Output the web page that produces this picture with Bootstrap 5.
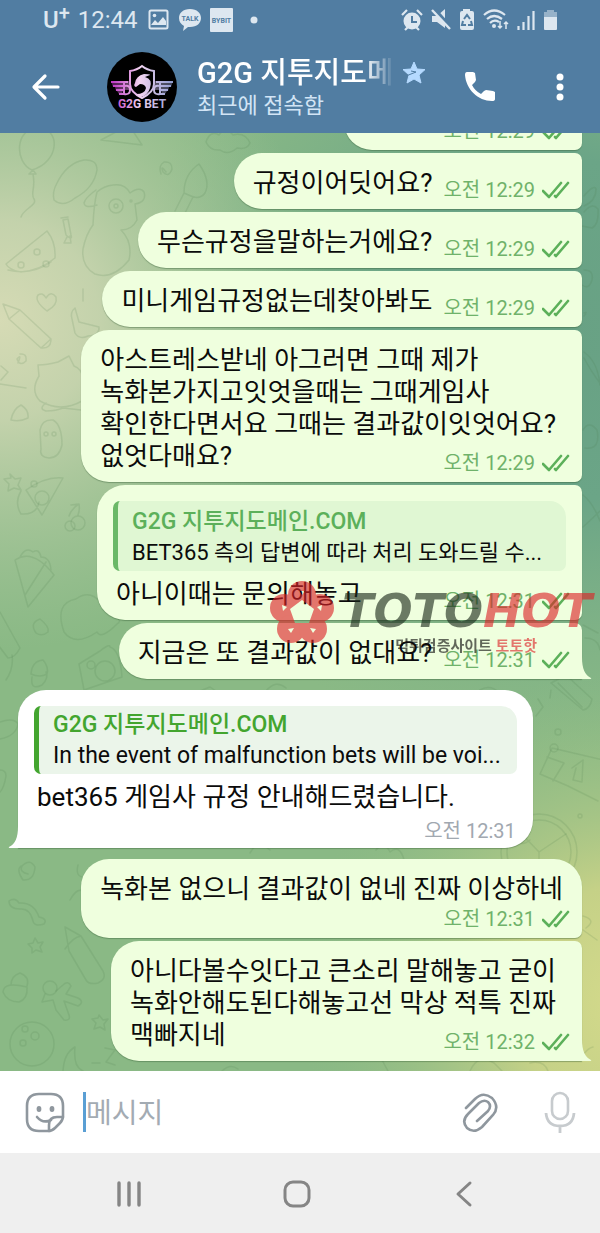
<!DOCTYPE html>
<html lang="ko">
<head>
<meta charset="utf-8">
<meta name="viewport" content="width=device-width, initial-scale=1">
<title>G2G 지투지도메인.COM</title>
<link href="https://cdn.jsdelivr.net/npm/bootstrap@5.3.0/dist/css/bootstrap.min.css" rel="stylesheet">
<style>
body{font-family:Roboto,"Noto Sans CJK KR",sans-serif;color:#0b0b0b;background:#efefef}
.topbar{background:#517da2;color:#fff}
.statusbar{height:40px;color:#dde7f0;padding:0 41px 0 43px}
.carrier{font:500 24px/40px Roboto,sans-serif}
.carrier sup{font-size:20px;top:-8px}
.clock{font-size:24px;line-height:42px}
.chat-head{height:93px;padding:0 20px 0 30px}
.plain{background:none;border:0;padding:0;line-height:0;color:inherit}
.avatar{margin-left:45px}
.peer{margin-left:20px;padding-top:4px}
.menu-btn{margin-left:52px}
.mic-btn{margin-left:44px;color:#c7cbce}
.peer-name{font-size:29px;line-height:34px;font-weight:500;-webkit-mask-image:linear-gradient(90deg,#000 85%,transparent);mask-image:linear-gradient(90deg,#000 85%,transparent)}
.peer-state{font-size:22px;line-height:32px;color:#d2e4f5}
.chat{background:#8ab986;padding:0 18px 10px;gap:3px;min-height:0;flex-basis:0}
.wallpaper{top:0;left:0}
.bubble{position:relative;background:#efffde;border-radius:28px 7px 7px 28px;padding:14px 12px 7px 19px;font-size:26px;line-height:32px;box-shadow:0 1px 1px rgba(50,90,50,.4)}
.bubble.peek{width:238px}
.bubble.para{padding-right:26px}
.bubble.para .stamp{margin-right:-14px}
.bubble.stacked{padding-right:19px;border-top-right-radius:28px}
.bubble.stacked .stamp{margin:2px -7px 0 0}
.bubble.reply{padding:16px 16px 7px;min-width:485px}
.bubble.reply .words{padding-left:3px;margin-top:7px}
.bubble.reply .stamp{margin-right:-4px}
.bubble.incoming{background:#fff;border-radius:28px 28px 28px 0;padding-bottom:5px}
.bubble.incoming .stamp{color:#a1a8b0;margin:6px 1px 0 0}
.bubble.last{border-bottom-right-radius:0}
.tail{position:absolute;bottom:0;left:100%}
.incoming .tail{left:auto;right:100%}
.newgroup{margin-top:8px}
.stamp{float:right;display:flex;align-items:center;gap:7px;margin:11px 0 0 11px;font-size:20px;line-height:24px;color:#6fb26a;white-space:nowrap}
.quote{border-left:5px solid #6ab867;border-radius:7px 16px 7px 7px;background:#e0f7d3;padding:5px 16px 3px 14px;font-size:22px;line-height:31px;white-space:nowrap}
.quote strong{display:block;font-size:23px;font-weight:500;color:#5cb05a}
.incoming .quote{border-color:#43a52f;background:#ebf5ea;font-size:23px;padding-top:3px}
.incoming .quote strong{color:#43a52f}
.brand{position:absolute;top:95px;right:-10px;z-index:3;gap:8px;opacity:.62;pointer-events:none}
.brand-name{font:italic 700 46px/46px "DejaVu Sans",sans-serif;color:#1b2a1b}
.brand-line{font-size:15px;line-height:24px;font-weight:700;padding-right:55px}
.brand .hot{color:#dd2327}
.composer{height:82px;background:#fff;padding:0 24px;color:#8f979e}
.caret{width:3px;height:40px;background:#5a9fd4;margin-left:17px}
.composer input{border:0;outline:0;padding:4px 0 0;font-size:28px;line-height:40px;min-width:0;background:none}
.composer input::placeholder{color:#a3abb3;opacity:1}
.sysnav{height:80px;background:#efefef;color:#858585;padding:2px 51px 0 45px}
</style>
</head>
<body>
<svg class="d-none">
  <symbol id="ticks" viewBox="0 0 28 18"><path d="M1 10l6 6L19 2M13 15l1 1L26 2" fill="none" stroke="#5cb05a" stroke-width="2.6" stroke-linecap="round" stroke-linejoin="round"/></symbol>
  <symbol id="tail" viewBox="0 0 10 22"><path d="M0 0C0 12 3 18 9 21Q10 22 8 22H0Z" fill="#efffde"/></symbol>
</svg>
<div class="d-flex flex-column vh-100 overflow-hidden">
  <header class="topbar">
    <div class="statusbar d-flex align-items-center">
      <span class="carrier">U<sup>+</sup></span>
      <span class="clock ms-2">12:44</span>
      <svg class="ms-2" width="24" height="22" viewBox="0 0 24 22"><rect x="3.500" y="1.500" width="18" height="18" rx="1.500" fill="none" stroke="currentColor" stroke-width="2"/><circle cx="8.500" cy="6.500" r="1.800" fill="currentColor"/><path d="M5 16l4-5 3 3 5-6 3 4v4z" fill="currentColor"/></svg>
      <svg class="ms-2" width="24" height="22" viewBox="0 0 24 22"><path d="M12 0C5 0 1 4 1 9c0 4 2 6 5 8l-1 5 5-4h2c7 0 11-4 11-9S19 0 12 0z" fill="currentColor"/><text x="12" y="12" text-anchor="middle" font-size="7" font-weight="700" fill="#517da2">TALK</text></svg>
      <svg class="ms-2" width="24" height="24" viewBox="0 0 24 24"><rect width="23" height="24" rx="1" fill="currentColor"/><text x="11.500" y="15" text-anchor="middle" font-size="7" font-weight="700" fill="#517da2">BYBIT</text></svg>
      <svg class="ms-3" width="8" height="8"><circle cx="4" cy="4" r="3.500" fill="currentColor"/></svg>
      <span class="d-flex align-items-center gap-2 ms-auto">
        <svg width="22" height="22" viewBox="0 0 22 22"><circle cx="11" cy="12" r="8.500" fill="currentColor"/><path d="M1 6l5-5M21 6l-5-5M4 21l3-3M18 21l-3-3" stroke="currentColor" stroke-width="2.200"/><path d="M11 7v6h5" fill="none" stroke="#517da2" stroke-width="2"/></svg>
        <svg width="20" height="22" viewBox="0 0 20 22"><path d="M1 7h5l8-7v19l-8-6H1z" fill="currentColor"/><path d="M3 0l17 19" stroke="#517da2" stroke-width="4"/><path d="M1 1l18 19" stroke="currentColor" stroke-width="2.400"/></svg>
        <svg width="16" height="22" viewBox="1 0 16 22"><path d="M5 2V0h7v2h2q2 0 2 2v15q0 2-2 2H4q-2 0-2-2V4q0-2 2-2z" fill="currentColor"/><path d="M6 10l3-4 3 4M13 12l1 4h-4M5 12l-1 4h4" fill="none" stroke="#517da2" stroke-width="2"/></svg>
        <svg width="26" height="22" viewBox="0 0 26 22"><path d="M1 6q10-9 21 0M4 10q7-6 15 0M7 14q4-4 9-1" fill="none" stroke="currentColor" stroke-width="2.200"/><circle cx="11" cy="17" r="2" fill="currentColor"/><path d="M17 12v7m-2-2l2 2 2-2M23 20v-7m-2 2l2-2 2 2" fill="none" stroke="currentColor" stroke-width="1.500"/></svg>
        <svg width="18" height="22" viewBox="0 0 18 22"><path d="M1.500 21v-4M6.500 21v-8M11.500 21V7M16.500 21V2" stroke="currentColor" stroke-width="2.200"/></svg>
        <svg width="16" height="22" viewBox="0 0 16 22"><path d="M4 3V1h7v2h3v5H1V3z" fill="currentColor" opacity=".5"/><path d="M1 8h13v12q0 1-1 1H2q-1 0-1-1z" fill="currentColor"/></svg>
      </span>
    </div>
    <div class="chat-head d-flex align-items-center">
      <button class="plain" type="button" aria-label="뒤로"><svg width="32" height="28" viewBox="0 0 32 28"><path d="M28 14H5M15 3L4 14l11 11" fill="none" stroke="currentColor" stroke-width="3.200" stroke-linecap="round" stroke-linejoin="round"/></svg></button>
      <svg class="avatar flex-shrink-0" width="70" height="70" viewBox="0 0 70 70">
        <defs><linearGradient id="lg" gradientUnits="userSpaceOnUse" x1="6" x2="66" y1="0" y2="0"><stop stop-color="#c03cc5"/><stop offset=".45" stop-color="#f3d5f2"/><stop offset="1" stop-color="#8f9cd0"/></linearGradient></defs>
        <circle cx="35" cy="35" r="35"/>
        <path d="M4 29h18l2 9h-7v-4l-2 8h-3l-2-3H9l-1-4H6zM66 29H48l-2 9h7v-4l2 8h3l2-3h1l1-4h2z" fill="url(#lg)" opacity=".45"/>
        <g fill="none" stroke="url(#lg)" stroke-width="2"><path d="M35 14q-5 4-12 5v13q0 8 12 14 12-6 12-14V19q-7-1-12-5z"/><path d="M4 30h17M6 34h11M9 38h8M12 42h6M66 30H49M64 34H53M61 38h-8M58 42h-6M17 31v11q6 1 6-4t-5-4M53 31v11q-6 1-6-4t5-4"/></g>
        <path d="M28 31q1-7 9-9 6 0 6 1l-5 2q8 2 5 11-2 7-9 9-5-1-5-3 9 0 10-6-1-4-6-4l-4 3q-3-1-1-4z" fill="url(#lg)"/>
        <text x="35" y="56" text-anchor="middle" font-size="12" font-weight="700" fill="url(#lg)">G2G BET</text>
      </svg>
      <div class="peer flex-grow-1 text-nowrap">
        <div class="d-flex align-items-center gap-2"><span class="peer-name">G2G 지투지도메</span>
          <svg width="24" height="24" viewBox="0 0 24 24"><path d="M12 1l3 7 8 .6-6 5.400 2 8-7-4-7 4 2-8-6-5.400L9 8z" fill="#b5daff" stroke="#b5daff" stroke-linejoin="round"/><path d="M4 15l10-4-5-1" fill="none" stroke="#517da2" stroke-width="1"/></svg></div>
        <div class="peer-state">최근에 접속함</div>
      </div>
      <button class="plain" type="button" aria-label="통화"><svg width="32" height="32" viewBox="0 0 32 32"><path d="M3 1h6l2 1 1 7-1 2-3 3q3 6 9 9l3-3 2-1 7 1 2 1v7q0 2-3 2C14 30 2 18 1 4q0-3 2-3z" fill="currentColor"/></svg></button>
      <button class="plain menu-btn" type="button" aria-label="메뉴"><svg width="32" height="30" viewBox="0 0 32 30"><g fill="currentColor"><circle cx="12" cy="5" r="3.500"/><circle cx="12" cy="15" r="3.500"/><circle cx="12" cy="25" r="3.500"/></g></svg></button>
    </div>
  </header>

  <main class="chat position-relative d-flex flex-column justify-content-end align-items-end flex-grow-1 overflow-hidden">
    <svg class="wallpaper position-absolute w-100 h-100" viewBox="0 133 600 938" preserveAspectRatio="none">
      <defs>
        <radialGradient id="g1" gradientUnits="userSpaceOnUse" cx="0" cy="320" r="330"><stop stop-color="#d6dbb5"/><stop offset=".3" stop-color="#cad5b0" stop-opacity=".9"/><stop offset="1" stop-color="#a9c79f" stop-opacity="0"/></radialGradient>
        <radialGradient id="g2" gradientUnits="userSpaceOnUse" cx="560" cy="330" r="430"><stop stop-color="#68a184"/><stop offset=".4" stop-color="#6ba587"/><stop offset="1" stop-color="#7cb088" stop-opacity="0"/></radialGradient>
        <radialGradient id="g3" gradientUnits="userSpaceOnUse" cx="630" cy="1000" r="330"><stop stop-color="#d4da8b"/><stop offset=".35" stop-color="#c5d187"/><stop offset="1" stop-color="#8fbc86" stop-opacity="0"/></radialGradient>
      </defs>
      <path fill="#8ab985" d="M0 133h600v938H0z"/><path fill="url(#g2)" d="M0 133h600v938H0z"/><path fill="url(#g1)" d="M0 133h600v938H0z"/><path fill="url(#g3)" d="M0 133h600v938H0z"/>
      <g fill="none" stroke="#4c7a4c" stroke-opacity=".15" stroke-width="1.500" stroke-linejoin="round" stroke-linecap="round">
        <path d="M32 170c-18-8-17-42 6-42s22 34-6 42zm-3 4h7l-3-4zm4 0c3 15-3 19 1 25s-11 10-13 18M101 140l28-15 13 20zM206 142q4-12 13-7 6-9 14 0 12-3 17 8-3 7-13 5-9 8-17 2-10 1-14-8z"/>
        <path d="M57 183q10-20 27-23 13-1 13 10-3 18-22 28-12 10-21 2-2-8 3-17zM166 172q-6-8-3 0 6 6 9-3 0-8-8-7-6 4-3 12"/>
        <path d="M97 192q7-6 16-7 12-2 17 8 10-7 14-1 3 10-9 12l2 16q-5 10-16 10 12 12 8 30-16 20-34 14-14-8-12-25 3-15 10-24 1-22 4-33M96 190q-11 8-12 13 1 6 13 2"/><circle cx="116" cy="206" r="7"/><circle cx="116" cy="206" r="2"/><circle cx="131" cy="201" r="1"/>
        <path d="M184 193q0-19 15-29 12 17 6 29-5 7-14 3zM184 193l-9 18m18-14l-9 18M63 220l3 15q7 6 5 0l-3-16zm-2-2l7-1m-1 20l-3 6h7l-1-7"/>
        <path d="M47 231q9 11 8 27-14 12-34 14-12-2-15-8zM8 270q23 6 43-8"/><circle cx="21" cy="265" r="3"/><circle cx="37" cy="252" r="3"/><circle cx="46" cy="264" r="3"/>
        <path d="M47 311q-13-10-9-16 5-3 8 3 5-8 10-1 2 8-9 14zM3 304l6 15 32 29 10-9-31-29zM9 319l11-9m21 38q10 1 10-9M75 308l4 14 20 5q1 8-11 9-9 4-13-3l-3-14q-2-7 3-11zM83 289v12"/>
        <path d="M38 365q9 0 20-3l11-6 5 10q10 4 8 15M38 365l1 11q-9 15 1 25 21 12 42 0M46 403q-8 6 0 8 10 0 17-3l18 2M1 366l7 6-7 8M0 384l26 4M18 363q4-10-1-4 3 8 9 2 1-8-6-7M11 420q2-11 10-15 8 5 7 13-8 4-17 2z"/>
        <path d="M40 430q2-11 13-10 9 5 9 25-3 13-13 13-10-1-8-9z"/><circle cx="46" cy="434" r="2"/><circle cx="54" cy="434" r="2"/>
        <path d="M10 474l5 5 6-1-3 7 3 5-7-2-6 3 1-7-5-5 7-1zM26 490q20-14 37-12L42 515zM21 491q-7 12 0 23 16 1 18-12"/><circle cx="42" cy="498" r="7"/><circle cx="34" cy="484" r="3"/>
        <circle cx="78" cy="523" r="7"/><circle cx="70" cy="526" r="5"/><path d="M69 516q3-8 10-12l-8 1m7 10q2-5 1-11"/>
        <path d="M15 560q18-12 39 15l-26 32zM25 595l21-33M20 557q6-11 13-5 6-4 8 5 9 0 10 13M64 632q-10-29 12-33 14-10 25 4 14-8 13 11 9 7 3 10-16 16-20 8-22 15-33 0zM0 612l20 36q-5 10-12 10L-2 645"/>
        <path d="M36 633q-7-10 4-14 10 8 8 13-6 5-12 1zM31 674q1-13 12-14 6 7 4 14-7 4-16 0zm1 3q-2 14 10 8 7-7 4-13M79 664l21-13q10-8 10-4 10 3 12 30L84 690z"/><circle cx="105" cy="671" r="10"/><circle cx="91" cy="665" r="4"/>
        <path d="M0 722q14-5 18 2-2 12-18 15M0 770q6 0 6 6-2 12-6 16M6 680q8-12 6-25"/>
        <path d="M28 874q-9-2-6-8 8-8 13 1-1 14-12 13-7-10-2-14M9 901q6-4 10 2 15-1 20 14 9 2 5 7-10 3-11-3-3-13-13-12-11 0-11-8zM65 927l16 9 22 35q4 8-5 12-9 2-12-3l-17-29zM65 949q8-12 16-13M35 938l3 5 5-1-3 5 2 5-6-2-4 3v-5l-4-4 5-1z"/>
        <path d="M3 992q1-11 24-5 1 12-8 15-12 0-16-10zM11 985q0-9 9-12 10 4 7 13"/><circle cx="50" cy="988" r="7"/><path d="M45 994l-3 8 11-2 3 10 8 10q7 1 5-5l-5-14 14 5q7-4 0-8l-12-4 5-8q-3-6-8-1l-7 6M99 1015l4 5 5-1-4 5 1 6-5-3-6 2 2-6-4-4 6-1z"/>
        <circle cx="32" cy="1044" r="22"/><circle cx="25" cy="1029" r="3"/><circle cx="35" cy="1036" r="4"/><circle cx="23" cy="1043" r="3"/><path d="M63 1071q1-18 12-24-2 20 8 24M70 900q8-14 14-8M78 865q-3 12 6 12M105 1048l10 2-9 12 9 3"/>
        <path d="M584 196q10-12 12-7 0 12-12 17m0 6q8-10 14-3 1 16-6 19l-10-2M584 270q10 0 8 10-3 10-10 5M584 316q4-5 0-3m0 39q14 10 16 33M584 358q8 15 16 25M583 430q6-10 14 0 4 20-12 18M583 495q10 8 17 26M583 527q10-9 17-16M583 625l15 8m-13 5q13 0 15 12"/>
        <path d="M551 683l15-8 26 24q-2 10-9 11zM551 690l-1 8m8-15l24 24M536 716l7-9-5-8M552 748l-12 26 28 12 30 15M552 748l51 12M547 757l17 6-11 18M572 768l11-8-1 22-9-2 3-12"/><circle cx="554" cy="748" r="4"/><circle cx="580" cy="816" r="2"/><circle cx="558" cy="732" r="3"/>
        <circle cx="539" cy="852" r="38"/><circle cx="539" cy="852" r="32"/><path d="M539 852l-24-25m24 25l27-18m-27 18v32m-9-44q-8 7-13 0"/>
        <path d="M583 1055q5-7 10-8M583 916q14 4 3 12M583 930l14 10M500 693q-10-9-20-3M376 850q8-10 14 2 10-8 14 8M200 691l10-4 6 4m50 0q10-12 20-3M250 853l8-12 12 9M470 1071q8-18 24-8l8 8M100 1063h-8m130 8q8-8 16-2M382 1060l6 11M530 1063q14-3 18 8"/>
      </g>
    </svg>

    <div class="bubble peek"><span class="stamp">오전 12:29 <svg width="28" height="18"><use href="#ticks"/></svg></span></div>
    <div class="bubble">규정이어딧어요?<span class="stamp">오전 12:29 <svg width="28" height="18"><use href="#ticks"/></svg></span></div>
    <div class="bubble">무슨규정을말하는거에요?<span class="stamp">오전 12:29 <svg width="28" height="18"><use href="#ticks"/></svg></span></div>
    <div class="bubble">미니게임규정없는데찾아봐도<span class="stamp">오전 12:29 <svg width="28" height="18"><use href="#ticks"/></svg></span></div>
    <div class="bubble para">아스트레스받네 아그러면 그때 제가<br>녹화본가지고잇엇을때는 그때게임사<br>확인한다면서요 그때는 결과값이잇엇어요?<br>없엇다매요?<span class="stamp">오전 12:29 <svg width="28" height="18"><use href="#ticks"/></svg></span></div>
    <div class="bubble reply">
      <div class="quote"><strong>G2G 지투지도메인.COM</strong>BET365 측의 답변에 따라 처리 도와드릴 수...</div>
      <div class="words">아니이때는 문의해놓고<span class="stamp">오전 12:31 <svg width="28" height="18"><use href="#ticks"/></svg></span></div>
      <div class="brand d-flex">
        <svg width="64" height="64" viewBox="0 0 64 64">
          <defs><mask id="holes"><path fill="#fff" d="M0 0h64v64H0z"/><path d="M32 20l12 9-5 14H25l-5-14zM29 11h6l-3 4zM12 25l5 2-4 4zM52 25l-5 2 4 4zM18 49l6-1-3 5zM46 49l-6-1 3 5z"/></mask></defs>
          <g fill="#dd2327" mask="url(#holes)"><circle cx="32" cy="15" r="14"/><circle cx="14" cy="28" r="14"/><circle cx="50" cy="28" r="14"/><circle cx="21" cy="49" r="14"/><circle cx="43" cy="49" r="14"/></g>
        </svg>
        <div class="text-end text-nowrap pt-1"><div class="brand-name mt-1">TOTO<span class="hot">HOT</span></div><div class="brand-line">먹튀검증사이트 <span class="hot">토토핫</span></div></div>
      </div>
    </div>
    <div class="bubble last">지금은 또 결과값이 없대요?<span class="stamp">오전 12:31 <svg width="28" height="18"><use href="#ticks"/></svg></span><svg class="tail" width="10" height="22"><use href="#tail"/></svg></div>
    <div class="bubble reply incoming newgroup align-self-start">
      <div class="quote"><strong>G2G 지투지도메인.COM</strong>In the event of malfunction bets will be voi...</div>
      <div class="words">bet365 게임사 규정 안내해드렸습니다.</div>
      <span class="stamp">오전 12:31</span>
      <svg class="tail" width="10" height="22" viewBox="0 0 10 22"><path d="M10 0C10 12 7 18 1 21Q0 22 2 22H10Z" fill="#fff"/></svg>
    </div>
    <div class="bubble stacked newgroup"><div>녹화본 없으니 결과값이 없네 진짜 이상하네</div><span class="stamp">오전 12:31 <svg width="28" height="18"><use href="#ticks"/></svg></span></div>
    <div class="bubble para last">아니다볼수잇다고 큰소리 말해놓고 굳이<br>녹화안해도된다해놓고선 막상 적특 진짜<br>맥빠지네<span class="stamp">오전 12:32 <svg width="28" height="18"><use href="#ticks"/></svg></span><svg class="tail" width="10" height="22"><use href="#tail"/></svg></div>
  </main>

  <form class="composer d-flex align-items-center flex-shrink-0">
    <button class="plain" type="button" aria-label="스티커"><svg width="42" height="42" viewBox="0 0 42 42" fill="none" stroke="currentColor" stroke-width="2.600"><path d="M39 25V15Q39 3 27 3H15Q3 3 3 15v13q0 12 12 12h9q4 0 7-3l5-5q3-3 3-7z"/><path d="M13 26q6 7 14 3M25 40v-6q0-8 8-8h6" stroke-linecap="round"/><g fill="currentColor" stroke="none"><ellipse cx="15" cy="18" rx="2.400" ry="3"/><ellipse cx="28" cy="18" rx="2.400" ry="3"/></g></svg></button>
    <span class="caret flex-shrink-0"></span>
    <input class="flex-grow-1" type="text" placeholder="메시지" aria-label="메시지">
    <button class="plain" type="button" aria-label="첨부"><svg width="36" height="42" viewBox="0 0 36 42"><path d="M4 17L13 8Q21 0 30 7q8 9 1 17L20 36q-8 7-15 1-6-7 1-14L17 12q5-4 9-1 4 4 0 9L15 30" fill="none" stroke="currentColor" stroke-width="2.600" stroke-linecap="round"/></svg></button>
    <button class="plain mic-btn" type="button" aria-label="음성 메시지"><svg width="34" height="42" viewBox="0 0 34 42"><rect x="10" y="2" width="16" height="26" rx="8" fill="none" stroke="currentColor" stroke-width="2.600"/><path d="M4 22q1 13 14 13t14-13M18 35v7" fill="none" stroke="currentColor" stroke-width="2.800"/></svg></button>
  </form>
  <nav class="sysnav d-flex align-items-center justify-content-around flex-shrink-0">
    <button class="plain" type="button" aria-label="최근 앱"><svg width="28" height="28" viewBox="0 0 28 28"><path d="M4 3v22M14 3v22M24 3v22" stroke="currentColor" stroke-width="3.400" stroke-linecap="round"/></svg></button>
    <button class="plain" type="button" aria-label="홈"><svg width="28" height="28" viewBox="0 0 28 28"><rect x="2" y="2" width="24" height="24" rx="8" fill="none" stroke="currentColor" stroke-width="3"/></svg></button>
    <button class="plain" type="button" aria-label="이전"><svg width="28" height="28" viewBox="0 0 28 28"><path d="M19 3L7 14l12 11" fill="none" stroke="currentColor" stroke-width="3" stroke-linecap="round" stroke-linejoin="round"/></svg></button>
  </nav>
</div>
<script src="https://cdn.jsdelivr.net/npm/bootstrap@5.3.0/dist/js/bootstrap.bundle.min.js"></script>
</body>
</html>
